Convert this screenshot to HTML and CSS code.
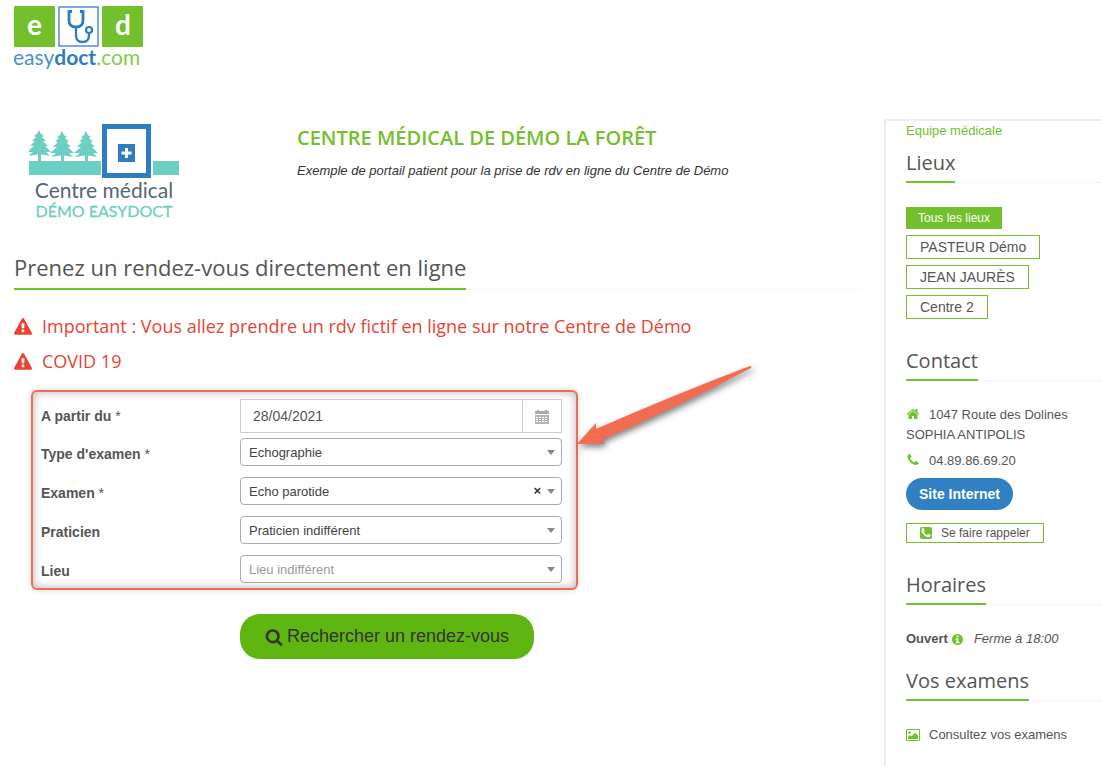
FILE: index.html
```
<!DOCTYPE html>
<html lang="fr">
<head>
    <meta charset="UTF-8">
    <meta name="viewport" content="width=device-width, initial-scale=1.0">
    <title>Centre médical de Démo La Forêt - easydoct.com</title>
    <link rel="stylesheet" href="styles.css">
</head>
<body>
    <header class="site-header">
        <a href="#" class="brand" aria-label="easydoct.com">
            <svg width="134" height="66" viewBox="0 0 134 66">
                <rect x="1" y="1" width="41" height="41" rx="1" fill="#72c02c"/>
                <rect x="46" y="2" width="39" height="39" fill="#fff" stroke="#4a90cf" stroke-width="1.5"/>
                <rect x="89" y="1" width="41" height="41" rx="1" fill="#72c02c"/>
                <text x="21.5" y="30" class="brand-letter">e</text>
                <text x="110" y="30" class="brand-letter">d</text>
                <path d="M59 6.500h-3v9q0 6.500 7 6.500t7-6.500v-9h-3" fill="none" stroke="#2f7dc1" stroke-width="2.800"/>
                <path d="M63 22v8q0 7 6.500 7t6.500-7v-2" fill="none" stroke="#2f7dc1" stroke-width="2.300"/>
                <circle cx="76" cy="25" r="3" fill="#fff" stroke="#2f7dc1" stroke-width="2.200"/>
                <text x="0" y="60" class="brand-name"><tspan fill="#4a90cf">easy</tspan><tspan class="brand-bold">doct</tspan><tspan fill="#85cb4c">.com</tspan></text>
            </svg>
        </a>
    </header>

    <div class="layout">
        <main class="content">
            <section class="center-intro">
                <svg class="center-logo" width="152" height="98" viewBox="0 0 152 98" role="img" aria-label="Centre médical Démo Easydoct">
                    <defs>
                        <path id="tree" d="M11 0L13 4 16 6 14 7 18 11 15 11 20 16 17 16 23 22 18 22 22 26 13 24.500V32H10V24.500L0 26 5 22-1 22 6 16 2 16 7 11 4 11 8 7 6 6 9 4Z"/>
                    </defs>
                    <g fill="#6ccfc1">
                        <use href="#tree" x="-1" y="8"/>
                        <use href="#tree" x="22" y="9"/>
                        <use href="#tree" x="46" y="9"/>
                        <rect x="0" y="39" width="72" height="14"/>
                        <rect x="124" y="39" width="26" height="14"/>
                    </g>
                    <rect x="75.500" y="4.500" width="44" height="49" fill="#fff" stroke="#2f7dc1" stroke-width="5"/>
                    <rect x="89" y="22" width="17" height="18" fill="#2f7dc1"/>
                    <path d="M97.500 26v10M92.500 31h10" stroke="#fff" stroke-width="3"/>
                    <text x="75" y="76" class="logo-line-1">Centre médical</text>
                    <text x="75" y="95" class="logo-line-2">DÉMO EASYDOCT</text>
                </svg>
                <div class="center-text">
                    <h1>CENTRE MÉDICAL DE DÉMO LA FORÊT</h1>
                    <p>Exemple de portail patient pour la prise de rdv en ligne du Centre de Démo</p>
                </div>
            </section>

            <div class="headline headline-main"><h2>Prenez un rendez-vous directement en ligne</h2></div>

            <ul class="alerts">
                <li>
                    <svg class="icon-alert" viewBox="0 0 1792 1792"><path d="M1024 1375v-190q0-14-9.500-23.500t-22.500-9.500h-192q-13 0-22.500 9.500t-9.500 23.500v190q0 14 9.500 23.500t22.500 9.500h192q13 0 22.500-9.500t9.500-23.500zm-2-374l18-459q0-12-10-19-13-11-24-11h-220q-11 0-24 11-10 7-10 21l17 457q0 10 10 16.500t24 6.500h185q14 0 23.500-6.500t10.500-16.500zm-14-934l768 1408q35 63-2 126-17 29-46.500 46t-63.500 17h-1536q-34 0-63.500-17t-46.500-46q-37-63-2-126l768-1408q17-31 47-49t65-18 65 18 47 49z"/></svg>
                    Important : Vous allez prendre un rdv fictif en ligne sur notre Centre de Démo
                </li>
                <li>
                    <svg class="icon-alert" viewBox="0 0 1792 1792"><path d="M1024 1375v-190q0-14-9.500-23.500t-22.500-9.500h-192q-13 0-22.500 9.500t-9.500 23.500v190q0 14 9.500 23.500t22.500 9.500h192q13 0 22.500-9.500t9.500-23.500zm-2-374l18-459q0-12-10-19-13-11-24-11h-220q-11 0-24 11-10 7-10 21l17 457q0 10 10 16.500t24 6.500h185q14 0 23.500-6.500t10.500-16.500zm-14-934l768 1408q35 63-2 126-17 29-46.500 46t-63.500 17h-1536q-34 0-63.500-17t-46.500-46q-37-63-2-126l768-1408q17-31 47-49t65-18 65 18 47 49z"/></svg>
                    COVID 19
                </li>
            </ul>

            <form class="search-form">
                <div class="fields">
                    <div class="row">
                        <label for="date">A partir du <span>*</span></label>
                        <div class="date-group">
                            <input type="text" id="date" value="28/04/2021">
                            <button type="button" class="date-button" aria-label="Calendrier">
                                <svg width="14" height="14" viewBox="0 0 14 14"><path fill="#aaa" d="M0 2q0-1 1-1h1V0h2v1h6V0h2v1h1q1 0 1 1v2H0z"/><path fill="#b5b5b5" d="M0 5h14v9H0z"/><path stroke="#fff" stroke-dasharray="2 1" d="M1 7.500h12M1 9.500h12M1 11.500h12"/></svg>
                            </button>
                        </div>
                    </div>
                    <div class="row">
                        <label for="type">Type d'examen <span>*</span></label>
                        <div class="select"><select id="type"><option>Echographie</option></select></div>
                    </div>
                    <div class="row">
                        <label for="examen">Examen <span>*</span></label>
                        <div class="select">
                            <select id="examen"><option>Echo parotide</option></select>
                            <button type="button" class="clear" aria-label="Effacer">×</button>
                        </div>
                    </div>
                    <div class="row">
                        <label for="praticien">Praticien</label>
                        <div class="select"><select id="praticien"><option>Praticien indifférent</option></select></div>
                    </div>
                    <div class="row">
                        <label for="lieu">Lieu</label>
                        <div class="select"><select id="lieu" class="placeholder"><option>Lieu indifférent</option></select></div>
                    </div>
                    <svg class="arrow" width="190" height="96" viewBox="0 0 190 96">
                        <path fill="#f26c50" d="M1 79L20 58V64Q100 29 174 1Q176 1 175 3Q104 41 25 75L29 79Z"/>
                    </svg>
                </div>
                <button type="submit" class="search-button">
                    <svg width="18" height="18" viewBox="0 0 1792 1792"><path d="M1216 832q0-185-131.500-316.500t-316.500-131.500-316.500 131.500-131.500 316.500 131.500 316.500 316.500 131.500 316.500-131.500 131.500-316.500zm512 832q0 52-38 90t-90 38q-54 0-90-38l-343-342q-179 124-399 124-143 0-273.500-55.500t-225-150-150-225-55.500-273.500 55.500-273.500 150-225 225-150 273.500-55.500 273.500 55.500 225 150 150 225 55.500 273.500q0 220-124 399l343 343q37 37 37 90z"/></svg>
                    Rechercher un rendez-vous
                </button>
            </form>
        </main>

        <aside class="sidebar">
            <a href="#" class="team-link">Equipe médicale</a>

            <div class="headline"><h2>Lieux</h2></div>
            <div class="places">
                <button type="button" class="place active">Tous les lieux</button>
                <button type="button" class="place">PASTEUR Démo</button>
                <button type="button" class="place">JEAN JAURÈS</button>
                <button type="button" class="place">Centre 2</button>
            </div>

            <div class="headline"><h2>Contact</h2></div>
            <div class="contact">
                <address>
                    <svg class="icon" viewBox="0 0 1792 1792"><path d="M1472 992v480q0 26-19 45t-45 19h-384v-384h-256v384h-384q-26 0-45-19t-19-45v-480q0-1 .5-3t.5-3l575-474 575 474q1 2 1 6zm223-69l-62 74q-8 9-21 11h-3q-13 0-21-7l-692-577-692 577q-12 8-24 7-13-2-21-11l-62-74q-8-10-7-23.500t11-21.500l719-599q32-26 76-26t76 26l244 204v-195q0-14 9-23t23-9h192q14 0 23 9t9 23v408l219 182q10 8 11 21.500t-7 23.500z"/></svg>1047 Route des Dolines<br>SOPHIA ANTIPOLIS
                </address>
                <p>
                    <svg class="icon" viewBox="0 0 1792 1792"><path id="phone" d="M1600 1240q0 27-10 70.500t-21 68.500q-21 50-122 106-94 51-186 51-27 0-53-3.500t-57.500-12.500-47-14.500-55.500-20.500-49-18q-98-35-175-83-127-79-264-216t-216-264q-48-77-83-175-3-9-18-49t-20.500-55.500-14.500-47-12.500-57.500-3.500-53q0-92 51-186 56-101 106-122 25-11 68.500-21t70.500-10q14 0 21 3 18 6 53 76 11 19 30 54t35 63.500 31 53.500q3 4 17.500 25t21.500 35.500 7 28.500q0 20-28.500 50t-62 55-62 53-28.500 46q0 9 5 22.500t8.500 20.500 14 24 11.500 19q76 137 174 235t235 174q2 1 19 11.500t24 14 20.500 8.500 22.500 5q18 0 46-28.500t53-62 55-62 50-28.500q14 0 28.500 7t35.500 21.500 25 17.500q25 15 53.500 31t63.500 35 54 30q70 35 76 53 3 7 3 21z"/></svg>04.89.86.69.20
                </p>
                <a href="#" class="website">Site Internet</a>
                <button type="button" class="callback">
                    <svg width="12" height="12" viewBox="0 0 12 12"><rect width="12" height="12" rx="2" fill="#72c02c"/><use href="#phone" fill="#fff" transform="translate(.2 .2) scale(.0065)"/></svg>
                    Se faire rappeler
                </button>
            </div>

            <div class="headline"><h2>Horaires</h2></div>
            <p class="hours">
                <strong>Ouvert</strong>
                <svg width="11" height="11" viewBox="0 0 12 12"><circle cx="6" cy="6" r="6" fill="#72c02c"/><path fill="#fff" d="M5 1.500h2v2H5zM4 4.500h3v4h1V10H4V8.500h1V6H4z"/></svg>
                <em>Ferme à 18:00</em>
            </p>

            <div class="headline"><h2>Vos examens</h2></div>
            <a href="#" class="exams">
                <svg width="14" height="12" viewBox="0 0 14 12"><path fill="none" stroke="#72c02c" d="M.5.5h13v11H.5z"/><circle cx="3.500" cy="3.500" r="1.300" fill="#72c02c"/><path fill="#72c02c" d="M2 10V8l2-2 1.500 1.500L9 3.500l3 3V10z"/></svg>
                Consultez vos examens
            </a>
        </aside>
    </div>
</body>
</html>
```
FILE: styles.css
```
* {
    box-sizing: border-box;
}
body {
    font-family: "Liberation Sans", Arial, sans-serif;
    font-size: 13px;
    line-height: 20px;
    margin: 0;
    min-height: 100vh;
    background-color: #fff;
    color: #555;
    display: flex;
    flex-direction: column;
}
h1, h2, p, ul {
    margin: 0;
    padding: 0;
}
h1, h2, .alerts {
    font-family: "Open Sans", sans-serif;
}
a {
    color: #72c02c;
    text-decoration: none;
}
button {
    font-family: inherit;
    cursor: pointer;
}
.site-header {
    height: 119px;
    padding: 5px 13px;
}
.brand {
    display: inline-block;
}
.brand-letter {
    font: bold 28px Lato, sans-serif;
    fill: #fff;
    text-anchor: middle;
}
.brand-name {
    font: 21px Lato, sans-serif;
}
.brand-bold {
    font-weight: bold;
    fill: #2f7dc1;
}
.layout {
    display: flex;
    flex: 1;
    gap: 24px;
}
.content {
    flex: 1;
    padding-left: 14px;
}
.center-intro {
    display: flex;
    gap: 116px;
    padding: 3px 0 0 15px;
}
.center-logo {
    flex: none;
}
.logo-line-1 {
    font: 21px Lato, sans-serif;
    fill: #56657a;
    text-anchor: middle;
}
.logo-line-2 {
    font: 16px Lato, sans-serif;
    fill: #6ccfc1;
    stroke: #6ccfc1;
    stroke-width: 0.3px;
    text-anchor: middle;
}
.center-text h1 {
    margin: 2px 0 12px;
    font-size: 20px;
    font-weight: 600;
    line-height: 28px;
    color: #72c02c;
}
.center-text p {
    color: #333;
    font-style: italic;
    line-height: 14px;
}
.headline {
    border-bottom: 1px dotted #e4e9f0;
}
.headline h2 {
    display: inline-block;
    margin-bottom: -1px;
    padding-bottom: 4px;
    border-bottom: 2px solid #72c02c;
    font-size: 20px;
    font-weight: 400;
    line-height: 28px;
    vertical-align: bottom;
}
.headline-main {
    margin-top: 32px;
}
.headline-main h2 {
    padding-bottom: 6px;
    font-size: 22px;
    line-height: 30px;
}
.alerts {
    margin-top: 19px;
    list-style: none;
    color: #ea4335;
    font-size: 18px;
    font-weight: 400;
    line-height: 35px;
}
.alerts li {
    display: flex;
    align-items: center;
    gap: 10px;
}
.icon-alert {
    width: 18px;
    height: 18px;
    fill: #ea4335;
}
.fields {
    position: relative;
    display: flex;
    flex-direction: column;
    gap: 11px;
    max-width: 547px;
    margin: 11px 0 0 17px;
    padding: 7px 14px 5px 8px;
    border: 2px solid #f26c50;
    border-radius: 6px;
    box-shadow: 0 0 6px rgba(0, 0, 0, 0.15), inset 0 0 10px rgba(0, 0, 0, 0.3);
}
.row {
    display: grid;
    grid-template-columns: 199px 1fr;
    align-items: center;
}
.row:first-child {
    margin-bottom: -6px;
}
.row label {
    font-size: 14px;
    font-weight: bold;
}
.row + .row label {
    padding-top: 4px;
}
.row label span {
    font-weight: normal;
}
.date-group {
    display: flex;
    height: 34px;
    border: 1px solid #ccc;
}
.date-group input {
    flex: 1;
    min-width: 0;
    padding: 0 12px;
    border: 0;
    font: 14px "Liberation Sans", Arial, sans-serif;
    color: #555;
    background: #fff;
}
.date-button {
    width: 39px;
    padding: 0;
    border: 0;
    border-left: 1px solid #ccc;
    background: #fff;
}
.date-button svg {
    vertical-align: middle;
}
.select {
    position: relative;
}
.select select {
    display: block;
    width: 100%;
    height: 28px;
    padding: 0 8px;
    border: 1px solid #aaa;
    border-radius: 4px;
    appearance: none;
    background: #fff;
    color: #444;
    font: 13px "Liberation Sans", Arial, sans-serif;
}
.select select.placeholder {
    color: #999;
}
.select::after {
    content: "";
    position: absolute;
    top: 12px;
    right: 7px;
    border: 4px solid transparent;
    border-top: 5px solid #888;
    border-bottom: 0;
    pointer-events: none;
}
.clear {
    position: absolute;
    top: 4px;
    right: 21px;
    padding: 0;
    border: 0;
    background: none;
    color: #333;
    font-size: 13px;
    font-weight: bold;
    line-height: 20px;
}
.arrow {
    position: absolute;
    left: 100%;
    top: -27px;
    filter: drop-shadow(2px 3px 3px rgba(0, 0, 0, 0.5));
    pointer-events: none;
}
.search-button {
    display: flex;
    align-items: center;
    gap: 4px;
    height: 45px;
    margin: 24px 0 0 226px;
    padding: 0 25px;
    border: 0;
    border-radius: 20px;
    background-color: #5fb611;
    color: #333;
    font-size: 18px;
}
.search-button svg {
    fill: #333;
}
.sidebar {
    width: 217px;
    padding-left: 20px;
    border-top: 2px solid #eee;
    border-left: 2px solid #eee;
}
.team-link {
    display: block;
    margin-bottom: 8px;
}
.places {
    display: flex;
    flex-direction: column;
    align-items: flex-start;
    gap: 6px;
    margin: 24px 0 28px;
}
.place {
    height: 24px;
    padding: 0 13px;
    border: 1px solid #72c02c;
    background: #fff;
    color: #555;
    font-size: 14px;
}
.place.active {
    height: 22px;
    padding: 0 11px;
    background: #72c02c;
    color: #fff;
    font-size: 12px;
}
.contact {
    display: flex;
    flex-direction: column;
    align-items: flex-start;
    margin: 24px 0 28px;
}
.contact address {
    margin-bottom: 6px;
    font-style: normal;
}
.icon {
    width: 14px;
    height: 14px;
    margin-right: 9px;
    fill: #72c02c;
    vertical-align: -2px;
}
.website {
    margin: 7px 0 13px;
    padding: 6px 13px;
    border-radius: 16px;
    background-color: #3180c3;
    color: #fff;
    font-size: 14px;
    font-weight: bold;
}
.callback {
    display: flex;
    align-items: center;
    gap: 9px;
    height: 20px;
    padding: 0 13px;
    border: 1px solid #72c02c;
    background: #fff;
    color: #555;
    font-size: 12px;
}
.hours {
    display: flex;
    align-items: center;
    gap: 4px;
    margin: 24px 0 18px;
}
.hours em {
    margin-left: 7px;
}
.exams {
    display: flex;
    align-items: center;
    gap: 9px;
    margin: 24px 0;
    color: #555;
}
```
